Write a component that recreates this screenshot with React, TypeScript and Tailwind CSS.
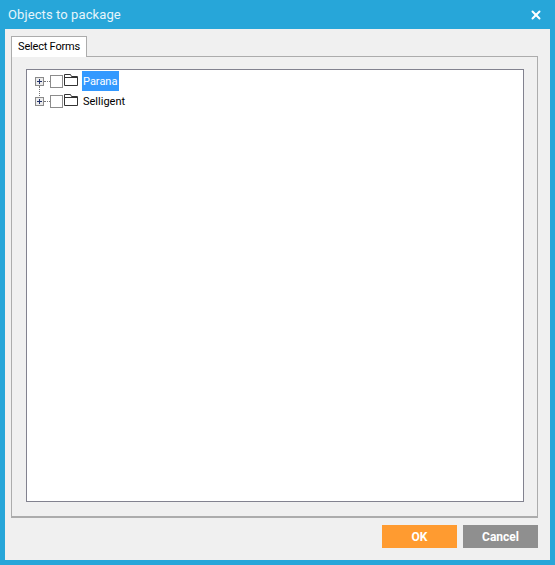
import { X } from "lucide-react";

function PlusBox() {
  return (
    <span className="w-[9px] h-[9px] border border-[#8a8a8a] bg-[#ececec] flex items-center justify-center relative shrink-0">
      <span className="absolute w-[5px] h-px bg-[#23336b]" />
      <span className="absolute w-px h-[5px] bg-[#23336b]" />
    </span>
  );
}

function FolderIcon() {
  return (
    <svg width="14" height="12" viewBox="0 0 14 12" className="shrink-0 -mt-[2px]">
      <path d="M0.5 11.5V0.5H6.5L7.5 2.5H13.5V11.5Z" fill="#fff" stroke="#333" />
      <path d="M0.5 3.5H13.5" stroke="#333" />
    </svg>
  );
}

function TreeRow({ label, selected }: { label: string; selected?: boolean }) {
  return (
    <div className="flex items-center h-5">
      <PlusBox />
      <span className="w-[6px] border-t border-dotted border-[#777] shrink-0" />
      <span className="w-[13px] h-[13px] border border-[#8c8c8c] bg-white shrink-0" />
      <span className="w-px shrink-0" />
      <FolderIcon />
      <span
        className={
          selected
            ? "ml-[4px] pl-[1px] pr-[2px] pt-px h-5 leading-5 bg-[#3399ff] text-white"
            : "ml-[4px] pl-[1px] pr-[2px] pt-px h-5 leading-5 text-black"
        }
      >
        {label}
      </span>
    </div>
  );
}

export default function App() {
  return (
    <div className="w-[555px] h-[565px] bg-[#27a6d9] flex flex-col px-[5px] pb-[5px] font-['Roboto','Open_Sans',sans-serif] overflow-hidden">
      {/* TITLE BAR */}
      <header className="h-[29px] flex items-center justify-between shrink-0 pl-[3px] pr-[7px] pt-px">
        <h1 className="text-[13px] text-[#e6f5fb] tracking-[0.1px]">Objects to package</h1>
        <X className="w-[14px] h-[14px] text-white" strokeWidth={3.4} />
      </header>

      {/* CLIENT AREA */}
      <div className="flex-1 bg-[#f0f0f0] flex flex-col pt-[7px] pl-[6px] pr-[12px]">
        <div className="w-[76px] h-[21px] bg-white border border-b-0 border-[#acacac] text-[11px] tracking-[-0.2px] flex items-center justify-center text-black relative z-10 -mb-px">
          Select Forms
        </div>

        <div className="h-[462px] border border-[#acacac] border-b-2 bg-[#f0f0f0] pt-[12px] pl-[14px] pb-[14px] pr-[13px] flex">
          <div className="flex-1 bg-white border border-[#82828f] pt-[1px] pl-[8px] text-[11px] relative">
            <span className="absolute left-[12px] top-[16px] h-[12px] border-l border-dotted border-[#777]" />
            <TreeRow label="Parana" selected />
            <TreeRow label="Selligent" />
          </div>
        </div>

        <div className="flex justify-end gap-[6px] mt-[7px]">
          <button className="w-[75px] h-[23px] bg-[#ff9b30] text-white text-[12px] font-bold">OK</button>
          <button className="w-[75px] h-[23px] bg-[#8f8f8f] text-white text-[12px] font-bold">Cancel</button>
        </div>
      </div>
    </div>
  );
}
